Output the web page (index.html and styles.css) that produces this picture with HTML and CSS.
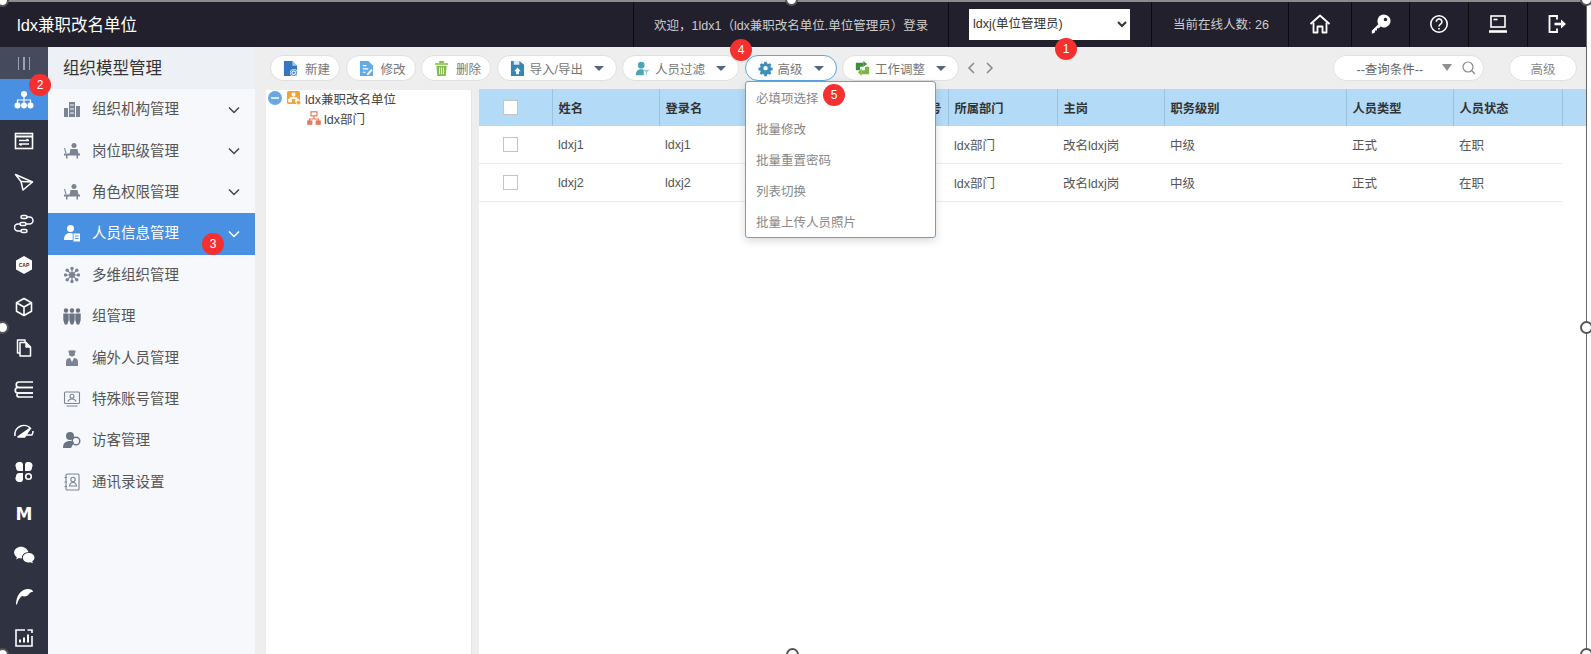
FILE: index.html
```html
<!DOCTYPE html>
<html lang="zh-CN">
<head>
    <meta charset="UTF-8">
    <title>组织模型管理</title>
    <link rel="stylesheet" href="styles.css">
</head>
<body>
<div class="page">
    <div class="frame-top"></div>

    <header class="topbar">
        <div class="brand">ldx兼职改名单位</div>
        <div class="cell welcome">欢迎，1ldx1（ldx兼职改名单位.单位管理员）登录</div>
        <div class="cell role">
            <select class="role-select"><option>ldxj(单位管理员)</option></select>
        </div>
        <div class="cell online">当前在线人数: 26</div>
        <div class="cell top-icon home">
            <svg width="22" height="22" viewBox="0 0 22 22" fill="none" stroke="#fff" stroke-width="1.8" stroke-linejoin="round"><path d="M1.5 11 11 2.5 20.500 11"/><path d="M4.500 9.500V19.500H8.500V13.500H13.500V19.500H17.500V9.500"/></svg>
        </div>
        <div class="cell top-icon key">
            <svg width="20" height="20" viewBox="0 0 20 20" fill="#fff"><path d="M13 0.500a6.500 6.500 0 1 1-3.300 12.100L8 14.300H6v2.200H4v2L2 19.500H0.800V16.800L7.300 10.200A6.500 6.500 0 0 1 13 0.500Z"/><circle cx="14.500" cy="5.500" r="1.700" fill="#22202c"/></svg>
        </div>
        <div class="cell top-icon help">
            <svg width="20" height="20" viewBox="0 0 20 20" fill="none" stroke="#fff" stroke-width="1.600"><circle cx="10" cy="10" r="8.200"/><path d="M7.300 7.800a2.800 2.800 0 1 1 4.300 2.300c-1 .7-1.600 1.100-1.600 2.300"/><path d="M10 14v1.500"/></svg>
        </div>
        <div class="cell top-icon monitor">
            <svg width="20" height="20" viewBox="0 0 20 20" fill="none" stroke="#fff" stroke-width="1.600"><rect x="3" y="2" width="14" height="11"/><path d="M5.500 5.500h4" /><path d="M1 17.500h18" stroke-width="2.600"/></svg>
        </div>
        <div class="cell top-icon logout">
            <svg width="20" height="20" viewBox="0 0 20 20" fill="none" stroke="#fff" stroke-width="1.800"><path d="M10 5.500V2H2.500V18H10V14.500"/><path d="M7.500 10h7" stroke-width="2.600"/><path d="M14 5.500 19 10 14 14.500Z" fill="#fff" stroke="none"/></svg>
        </div>
    </header>

    <div class="main">
        <nav class="rail">
            <div class="rail-toggle"><i></i><i></i><i></i></div>
            <a class="rail-item active">
                <svg width="20" height="20" viewBox="0 0 20 20" fill="#fff"><circle cx="10" cy="4" r="3"/><circle cx="3.500" cy="15.500" r="3"/><circle cx="10" cy="15.500" r="3"/><circle cx="16.500" cy="15.500" r="3"/><path d="M9.400 6h1.200v3.400h6.500v4h-1.200v-2.800H10.600v2.800H9.400v-2.800H4.100v2.800H2.900v-4h6.500Z"/></svg>
            </a>
            <a class="rail-item">
                <svg width="20" height="20" viewBox="0 0 20 20" fill="none" stroke="#fff" stroke-width="1.600"><rect x="1.500" y="2.500" width="17" height="15"/><path d="M1.500 5.500h17" stroke-width="2"/><path d="M5 9.500h10M12.500 8l2.500 1.500M15 13H5M7.500 14.500 5 13" stroke-width="1.400"/></svg>
            </a>
            <a class="rail-item">
                <svg width="20" height="20" viewBox="0 0 20 20" fill="none" stroke="#fff" stroke-width="1.500" stroke-linejoin="round"><path d="M1.500 2.500 18.500 10 9 18 7 9.500Z"/><path d="M7 9.500 18.500 10"/></svg>
            </a>
            <a class="rail-item">
                <svg width="20" height="20" viewBox="0 0 20 20" fill="none" stroke="#fff" stroke-width="1.500"><rect x="7" y="1.500" width="6" height="3" rx="1.500"/><rect x="6" y="8.500" width="6" height="3" rx="1.500"/><rect x="7" y="15.500" width="6" height="3" rx="1.500"/><path d="M13 3h2.500a3.500 3.500 0 0 1 0 7H12M6 10H4a3 3 0 0 0 0 7h3"/></svg>
            </a>
            <a class="rail-item">
                <svg width="20" height="20" viewBox="0 0 20 20"><path d="M10 1 18 5.500V14.500L10 19 2 14.500V5.500Z" fill="#fff"/><text x="10" y="12" text-anchor="middle" class="cap-text">CAP</text></svg>
            </a>
            <a class="rail-item">
                <svg width="20" height="20" viewBox="0 0 20 20" fill="none" stroke="#fff" stroke-width="1.600" stroke-linejoin="round"><path d="M10 1.500 17.500 5.700V14.300L10 18.500 2.500 14.300V5.700Z"/><path d="M2.500 5.700 10 10 17.500 5.700M10 10V18.500"/></svg>
            </a>
            <a class="rail-item">
                <svg width="20" height="20" viewBox="0 0 20 20" fill="none" stroke="#fff" stroke-width="1.500" stroke-linejoin="round"><path d="M6 4.500H12L16.500 9V18H6Z"/><path d="M6 15H3.500V2H11V4.500"/><path d="M12 4.500V9H16.500" fill="#fff"/></svg>
            </a>
            <a class="rail-item">
                <svg width="20" height="20" viewBox="0 0 20 20" fill="none" stroke="#fff" stroke-width="1.700"><path d="M19 3H5a2.500 2.500 0 0 0 0 5.500h14"/><path d="M19 8.500H4a2.500 2.500 0 0 0 0 5.500h15"/><path d="M19 14H5a2 2 0 0 0 0 4h14"/></svg>
            </a>
            <a class="rail-item">
                <svg width="22" height="20" viewBox="0 0 22 20" fill="none" stroke="#fff" stroke-width="1.600" stroke-linejoin="round"><path d="M2 15a9 9 0 0 1 16-7"/><path d="M20 10a9 9 0 0 1-1 4H9"/><path d="M5 16 17 7.500 11.500 16Z" fill="#fff"/></svg>
            </a>
            <a class="rail-item">
                <svg width="20" height="20" viewBox="0 0 20 20" fill="#fff"><path d="M2 5.500A3.500 3.500 0 0 1 9 2V9H5.500A3.500 3.500 0 0 1 2 5.500Z"/><path d="M18 5.500A3.500 3.500 0 0 0 11 2V9h3.500A3.500 3.500 0 0 0 18 5.500Z"/><path d="M2 14.500A3.500 3.500 0 0 0 9 18V11H5.500A3.500 3.500 0 0 0 2 14.500Z"/><circle cx="14.500" cy="14.500" r="2.800" fill="none" stroke="#fff" stroke-width="1.600"/></svg>
            </a>
            <a class="rail-item m-logo">M</a>
            <a class="rail-item">
                <svg width="22" height="22" viewBox="0 0 20 20" fill="#fff"><path d="M7.500 2.500C3.900 2.500 1 4.900 1 7.800c0 1.700 1 3.200 2.500 4.200L3 14l2.300-1.200c.7.200 1.400.3 2.200.3h.5a5 5 0 0 1 5.500-5.500h.7C13.100 4.600 10.600 2.500 7.500 2.500Z"/><path d="M19.500 12.500c0-2.500-2.400-4.300-5.200-4.300s-5.300 1.800-5.300 4.300 2.400 4.300 5.300 4.300c.6 0 1.200-.1 1.700-.3l2 1-.5-1.800c1.200-.8 2-1.900 2-3.200Z"/></svg>
            </a>
            <a class="rail-item">
                <svg width="20" height="20" viewBox="0 0 20 20" fill="#fff"><path d="M2 18.500C2 10 7 3 14 3c3 0 5 1 5 3-2 0-3 .5-4 2-1 2-4 3-7 2-2 1.500-4 4-5 8.500Z"/></svg>
            </a>
            <a class="rail-item">
                <svg width="20" height="20" viewBox="0 0 20 20" fill="none" stroke="#fff" stroke-width="1.600"><path d="M11 2H2V18H18V8M13.500 2H18V5"/><path d="M6 14.500v-3M10 14.500v-5M14 14.500v-8" stroke-width="2"/></svg>
            </a>
        </nav>

        <aside class="sidebar">
            <div class="side-title">组织模型管理</div>
            <a class="side-item">
                <svg class="side-icon" viewBox="0 0 18 18" fill="#7b8494"><path d="M1 8h4v9H1ZM6 2h6v15H6ZM13 6h4v11h-4Z"/><path d="M7.500 4h1v2h-1ZM9.500 4h1v2h-1ZM7.500 8h1v2h-1ZM9.500 8h1v2h-1ZM7.500 12h1v2h-1ZM9.500 12h1v2h-1Z" fill="#f6f8fb"/></svg>
                <span class="side-text">组织机构管理</span>
                <svg class="chev" viewBox="0 0 12 8" fill="none" stroke="#444" stroke-width="1.500"><path d="M1 1.500 6 6.500 11 1.500"/></svg>
            </a>
            <a class="side-item">
                <svg class="side-icon" viewBox="0 0 18 18" fill="#7b8494"><circle cx="11" cy="3.500" r="2.500"/><path d="M7.500 7h7l1 5h-9Z"/><path d="M1 11.500h16v2H15v3h-1.500v-3h-9v3H3v-3H1ZM2 6l1.500 5H2.300L1 6Z"/></svg>
                <span class="side-text">岗位职级管理</span>
                <svg class="chev" viewBox="0 0 12 8" fill="none" stroke="#444" stroke-width="1.500"><path d="M1 1.500 6 6.500 11 1.500"/></svg>
            </a>
            <a class="side-item">
                <svg class="side-icon" viewBox="0 0 18 18" fill="#7b8494"><circle cx="11" cy="3.500" r="2.500"/><path d="M7.500 7h7l1 5h-9Z"/><path d="M1 11.500h16v2H15v3h-1.500v-3h-9v3H3v-3H1ZM2 6l1.500 5H2.300L1 6Z"/></svg>
                <span class="side-text">角色权限管理</span>
                <svg class="chev" viewBox="0 0 12 8" fill="none" stroke="#444" stroke-width="1.500"><path d="M1 1.500 6 6.500 11 1.500"/></svg>
            </a>
            <a class="side-item active">
                <svg class="side-icon" viewBox="0 0 18 18" fill="#fff"><circle cx="7.500" cy="4.500" r="3.500"/><path d="M1 16c0-4.500 2-7 6.500-7 1 0 1.500.1 2.200.4V16Z"/><path d="M10.500 9.500h6.500v8h-6.500Z"/><path d="M12 12h3.500M12 14.500h3.500" stroke="#4a90e2"/></svg>
                <span class="side-text">人员信息管理</span>
                <svg class="chev" viewBox="0 0 12 8" fill="none" stroke="#fff" stroke-width="1.500"><path d="M1 1.500 6 6.500 11 1.500"/></svg>
            </a>
            <a class="side-item">
                <svg class="side-icon" viewBox="0 0 18 18" fill="#7b8494"><path d="M9 1v16M1 9h16M3.300 3.300l11.400 11.400M14.700 3.300 3.300 14.700" stroke="#7b8494" stroke-width="1.200"/><circle cx="9" cy="9" r="3"/><circle cx="9" cy="2.500" r="1.700"/><circle cx="9" cy="15.500" r="1.700"/><circle cx="2.500" cy="9" r="1.700"/><circle cx="15.500" cy="9" r="1.700"/><circle cx="4.200" cy="4.200" r="1.700"/><circle cx="13.800" cy="4.200" r="1.700"/><circle cx="4.200" cy="13.800" r="1.700"/><circle cx="13.800" cy="13.800" r="1.700"/></svg>
                <span class="side-text">多维组织管理</span>
            </a>
            <a class="side-item">
                <svg class="side-icon" viewBox="0 0 18 18" fill="#6a7382"><circle cx="3" cy="3.500" r="2.200"/><circle cx="9" cy="3.500" r="2.200"/><circle cx="15" cy="3.500" r="2.200"/><path d="M.3 6.500h5.400v6.500l-1.400 4.500H1.700L.3 13ZM6.300 6.500h5.400v6.500l-1.400 4.500H7.700L6.300 13ZM12.300 6.500h5.400v6.500l-1.400 4.500h-2.600L12.300 13Z"/></svg>
                <span class="side-text">组管理</span>
            </a>
            <a class="side-item">
                <svg class="side-icon" viewBox="0 0 18 18" fill="#7b8494"><circle cx="9" cy="4.500" r="3"/><path d="M5.500 1.500h7v2h-7Z"/><path d="M3 17v-4.500C3 10 5 9 7 9l2 4 2-4c2 0 4 1 4 3.500V17Z"/></svg>
                <span class="side-text">编外人员管理</span>
            </a>
            <a class="side-item">
                <svg class="side-icon" viewBox="0 0 18 18" fill="none" stroke="#7b8494" stroke-width="1.100"><rect x="1.500" y="2" width="15" height="11.500" rx="1"/><circle cx="9" cy="6.300" r="2"/><path d="M5 11.500c.5-2 2-2.500 4-2.500s3.500.5 4 2.500M3.500 16h11"/></svg>
                <span class="side-text">特殊账号管理</span>
            </a>
            <a class="side-item">
                <svg class="side-icon" viewBox="0 0 18 18" fill="#6a7382"><circle cx="7" cy="5" r="4"/><path d="M0 17c0-5 2.500-7 7-7 2 0 3 .5 4 1.500L8 17Z"/><circle cx="13" cy="10" r="3.800" fill="none" stroke="#6a7382" stroke-width="1.400"/></svg>
                <span class="side-text">访客管理</span>
            </a>
            <a class="side-item">
                <svg class="side-icon" viewBox="0 0 18 18" fill="none" stroke="#7b8494" stroke-width="1.100"><rect x="3" y="1" width="13" height="16" rx="1"/><circle cx="10" cy="6.500" r="2.200"/><path d="M6.500 13c.3-2.500 1.500-3.500 3.500-3.500s3.200 1 3.500 3.500ZM1.500 4.500H4M1.500 9H4M1.500 13.500H4"/></svg>
                <span class="side-text">通讯录设置</span>
            </a>
        </aside>

        <div class="workspace">
            <div class="toolbar">
                <button class="tool-btn small">
                    <svg class="tool-icon" viewBox="0 0 16 18"><path d="M1 1h9l5 5v11H1Z" fill="#3476c0"/><path d="M10 1v5h5Z" fill="#a8c8ea"/><circle cx="11.500" cy="13.500" r="4" fill="#fff"/><circle cx="11.500" cy="13.500" r="3" fill="none" stroke="#3476c0"/><path d="M11.500 12v3M10 13.500h3" stroke="#3476c0"/></svg>
                    新建
                </button>
                <button class="tool-btn small">
                    <svg class="tool-icon" viewBox="0 0 16 18"><path d="M1 1h9l5 5v11H1Z" fill="#62abe4"/><path d="M4 6h4M4 9.500h6M4 13h3" stroke="#fff" stroke-width="1.300"/><path d="M8.500 14.500 13 9.500l1.500 1.500-4.500 5H8.500Z" fill="#fff"/></svg>
                    修改
                </button>
                <button class="tool-btn small">
                    <svg class="tool-icon" viewBox="0 0 16 18" fill="#80bd4a"><path d="M1 3.500h14v1.500H1ZM5.500 1h5v2h-5Z"/><path d="M2.500 6h11L12.500 17h-9ZM5.500 8v7h1V8ZM7.500 8v7h1V8ZM9.500 8v7h1V8Z" fill-rule="evenodd"/></svg>
                    删除
                </button>
                <button class="tool-btn wide">
                    <svg class="tool-icon" viewBox="0 0 16 18"><path d="M1 1h9l5 4v12H1Z" fill="#3a86b0"/><path d="M4 1h6v4H4Z" fill="#dbe8ef"/><path d="M8 8 11.500 12H9.500v3h-3v-3H4.500Z" fill="#fff"/></svg>
                    导入/导出<i class="caret"></i>
                </button>
                <button class="tool-btn mid">
                    <svg class="tool-icon user-filter" viewBox="0 0 18 18"><circle cx="7.500" cy="5" r="4" fill="#4ea3b5"/><path d="M1 17c0-5 2.500-7 6.500-7 1.500 0 2.500.3 3 .7V17Z" fill="#4ea3b5"/><path d="M10 10.500h7.500l-3 3v3l-1.500 1v-4Z" fill="#9cccd8"/></svg>
                    人员过滤<i class="caret"></i>
                </button>
                <button class="tool-btn adv open">
                    <svg class="tool-icon" viewBox="0 0 18 18" fill="#3f8fb8"><path d="M7.500 1h3l.4 2.200 1.600.7 1.900-1.200 2 2.100-1.200 1.800.6 1.600 2.200.4v3l-2.200.4-.6 1.600 1.200 1.800-2 2.100-1.900-1.200-1.600.7-.4 2.200h-3l-.4-2.200-1.600-.7-1.900 1.200-2-2.100 1.200-1.800-.6-1.600-2.200-.4v-3l2.200-.4.600-1.600L1.600 4.800l2-2.100 1.900 1.200 1.600-.7ZM9 6.200a2.800 2.800 0 1 0 0 5.600 2.800 2.800 0 0 0 0-5.600Z" fill-rule="evenodd" transform="translate(.5 0) scale(.95)"/></svg>
                    高级<i class="caret"></i>
                </button>
                <button class="tool-btn mid work">
                    <svg class="tool-icon" viewBox="0 0 18 18"><path d="M1 2h9v5H6v4H1Z" fill="#3f8f3a"/><path d="M17 16H8v-5h4V7h5Z" fill="#7bb542"/><path d="M10 0l4.500 3.500L10 7Z" fill="#3f8f3a"/><path d="M8 18l-4.500-4.500L8 9Z" fill="#7bb542"/></svg>
                    工作调整<i class="caret"></i>
                </button>
                <svg class="pager" viewBox="0 0 30 14" fill="none" stroke="#888" stroke-width="1.500"><path d="M7 2 2 7 7 12M20 2 25 7 20 12"/></svg>

                <div class="query">
                    <span class="query-text">--查询条件--</span>
                    <i class="query-caret"></i>
                    <svg class="query-search" viewBox="0 0 14 14" fill="none" stroke="#888" stroke-width="1.200"><circle cx="6" cy="6" r="5"/><path d="M9.500 9.500 13 13"/></svg>
                </div>
                <button class="tool-btn adv-right">高级</button>
            </div>

            <div class="content">
                <div class="tree">
                    <div class="tree-row">
                        <span class="tree-minus"></span>
                        <svg class="tree-icon" viewBox="0 0 14 14"><rect width="13" height="13" rx="1.500" fill="#f0a23c"/><path d="M5 2h3v3H5ZM1.500 8h3v3h-3ZM8.500 8h3v3h-3ZM3 8V6.500h7V8M6.500 5V6.500" fill="#fff" stroke="#fff" stroke-width=".6"/><circle cx="11.500" cy="11.500" r="2.200" fill="#f0a23c" stroke="#fff" stroke-width=".7"/></svg>
                        <span>ldx兼职改名单位</span>
                    </div>
                    <div class="tree-row child">
                        <svg class="tree-icon" viewBox="0 0 14 14" fill="none" stroke="#e8785a" stroke-width="1.200"><rect x="4" y=".8" width="6" height="4"/><path d="M7 5v3M2.500 10V8h9v2"/><rect x=".8" y="10" width="4" height="3.200" fill="#e8785a"/><rect x="9.200" y="10" width="4" height="3.200" fill="#e8785a"/></svg>
                        <span>ldx部门</span>
                    </div>
                </div>

                <div class="grid-wrap">
                    <table class="grid">
                        <colgroup>
                            <col class="c73"><col class="c107"><col class="c108"><col class="c119"><col class="c62"><col class="c109"><col class="c107"><col class="c182"><col class="c107"><col class="c109"><col class="c24">
                        </colgroup>
                        <thead>
                            <tr>
                                <th class="check-cell"><span class="check"></span></th>
                                <th>姓名</th><th>登录名</th><th></th><th>人员编号</th><th>所属部门</th><th>主岗</th><th>职务级别</th><th>人员类型</th><th>人员状态</th><th></th>
                            </tr>
                        </thead>
                        <tbody>
                            <tr>
                                <td class="check-cell"><span class="check"></span></td>
                                <td>ldxj1</td><td>ldxj1</td><td></td><td></td><td>ldx部门</td><td>改名ldxj岗</td><td>中级</td><td>正式</td><td>在职</td><td class="tail"></td>
                            </tr>
                            <tr>
                                <td class="check-cell"><span class="check"></span></td>
                                <td>ldxj2</td><td>ldxj2</td><td></td><td></td><td>ldx部门</td><td>改名ldxj岗</td><td>中级</td><td>正式</td><td>在职</td><td class="tail"></td>
                            </tr>
                        </tbody>
                    </table>
                </div>
            </div>
        </div>
    </div>

    <ul class="adv-menu">
        <li>必填项选择</li>
        <li>批量修改</li>
        <li>批量重置密码</li>
        <li>列表切换</li>
        <li>批量上传人员照片</li>
    </ul>

    <span class="badge b1">1</span>
    <span class="badge b2">2</span>
    <span class="badge b3">3</span>
    <span class="badge b4">4</span>
    <span class="badge b5">5</span>

    <i class="handle h-tl"></i><i class="handle h-tc"></i><i class="handle h-tr"></i>
    <i class="handle h-ml"></i><i class="handle h-mr"></i>
    <i class="handle h-bl"></i><i class="handle h-bc"></i><i class="handle h-br"></i>
</div>
</body>
</html>
```

FILE: styles.css
```css
html, body {
    margin: 0;
    padding: 0;
    height: 100%;
    overflow: hidden;
    background: #fff;
}

body {
    font-family: "Liberation Sans", "Noto Sans CJK SC", sans-serif;
    font-size: 12.5px;
    color: #555;
}

.page {
    position: relative;
    display: flex;
    flex-direction: column;
    width: 1587px;
    height: 654px;
    box-sizing: border-box;
    border-right: 1px solid #666;
}

.frame-top {
    height: 2px;
    background: #8c8c8c;
    flex: none;
}

/* 顶栏 */
.topbar {
    display: flex;
    flex: none;
    height: 45px;
    background: #22202c;
    color: #ccc;
}

.brand {
    width: 616px;
    padding-left: 17px;
    font-size: 16.5px;
    line-height: 46px;
    color: #fff;
}

.cell {
    display: flex;
    align-items: center;
    box-sizing: border-box;
    border-left: 1px solid #0c0b10;
}

.welcome {
    width: 315px;
    padding-left: 20px;
    white-space: nowrap;
}

.role {
    width: 203px;
    padding-left: 20px;
}

.role-select {
    width: 161px;
    height: 31px;
    border: 0;
    border-radius: 0;
    background: #fff;
    font: 12.5px "Liberation Sans", "Noto Sans CJK SC", sans-serif;
    color: #333;
    margin-top: -1px;
}

.online {
    width: 137px;
    padding: 0 0 2px 21px;
    white-space: nowrap;
}

.top-icon {
    justify-content: center;
    padding-bottom: 2px;
}

.home { width: 63px; }
.key { width: 58px; }
.help { width: 59px; }
.monitor { width: 59px; }
.logout { width: 58px; }

.main {
    display: flex;
    flex: 1;
    min-height: 0;
}

/* 左侧图标栏 */
.rail {
    flex: none;
    width: 48px;
    background: #2f3241;
}

.rail-toggle {
    display: flex;
    justify-content: center;
    align-items: center;
    gap: 4px;
    height: 32px;
    background: #454a5c;
}

.rail-toggle i {
    width: 1.500px;
    height: 13px;
    background: #9ea3b0;
}

.rail-item {
    display: flex;
    justify-content: center;
    align-items: center;
    height: 41.4px;
}

.rail-item.active {
    background: #4a90e2;
}

.cap-text {
    font: bold 5px "Liberation Sans", sans-serif;
    fill: #2f3241;
}

.m-logo {
    font: bold 17px "DejaVu Sans", sans-serif;
    color: #fff;
}

/* 二级菜单 */
.sidebar {
    flex: none;
    width: 207px;
    background: #f6f8fb;
}

.side-title {
    height: 42px;
    padding-left: 15px;
    background: #edf0f4;
    font-size: 16.5px;
    line-height: 42px;
    color: #333;
}

.side-item {
    display: flex;
    align-items: center;
    height: 41.4px;
    padding: 0 15px 0 15px;
    font-size: 14.5px;
    color: #555;
}

.side-item.active {
    background: #4a90e2;
    color: #fff;
}

.side-icon {
    width: 18px;
    height: 18px;
    flex: none;
    margin-bottom: 1px;
}

.side-text {
    flex: 1;
    margin: 0 0 4px 11px;
}

.chev {
    width: 12px;
    height: 8px;
}

/* 工具栏 */
.workspace {
    display: flex;
    flex: 1;
    flex-direction: column;
    min-width: 0;
    background: #eee;
}

.toolbar {
    display: flex;
    align-items: center;
    flex: none;
    gap: 5.500px;
    height: 42px;
    padding: 0 9px 0 15px;
}

.tool-btn {
    display: flex;
    align-items: center;
    box-sizing: border-box;
    height: 26px;
    padding: 0 0 0 12px;
    border: 1px solid #e0e0e0;
    border-radius: 13px;
    background: #fff;
    font: 12.5px "Liberation Sans", "Noto Sans CJK SC", sans-serif;
    color: #777;
    white-space: nowrap;
}

.tool-btn.small { width: 70px; }
.tool-btn.wide { width: 120px; }
.tool-btn.mid { width: 117px; }
.tool-btn.adv { width: 92px; }

.tool-btn.open {
    border-color: #58a8e0;
}

.tool-icon {
    width: 15px;
    height: 17px;
    margin-right: 7px;
    flex: none;
}

.wide .tool-icon,
.mid .tool-icon,
.adv .tool-icon {
    margin-right: 5px;
}

.caret {
    width: 0;
    height: 0;
    margin-left: 11px;
    border-style: solid;
    border-width: 5px 5.500px 0;
    border-color: #55677f transparent transparent;
}

.pager {
    width: 30px;
    height: 14px;
    margin-left: 2px;
}

.query {
    display: flex;
    align-items: center;
    box-sizing: border-box;
    width: 151px;
    height: 26px;
    margin-left: auto;
    padding-left: 23px;
    border: 1px solid #e2e2e2;
    border-radius: 13px;
    background: #fff;
    color: #666;
}

.query-text {
    width: 67px;
    white-space: nowrap;
}

.query-caret {
    width: 0;
    height: 0;
    margin: -2px 0 0 18px;
    border-style: solid;
    border-width: 7px 5.500px 0;
    border-color: #8f8f8f transparent transparent;
}

.query-search {
    width: 14px;
    height: 14px;
    margin-left: 10px;
}

.tool-btn.adv-right {
    justify-content: center;
    width: 68px;
    margin-left: 20px;
    padding: 0;
    color: #888;
}

/* 内容区 */
.content {
    display: flex;
    flex: 1;
    min-height: 0;
    padding-left: 11px;
}

.tree {
    flex: none;
    box-sizing: border-box;
    width: 206px;
    margin: 1px 7px 0 0;
    padding: 0 0 0 2px;
    background: #fff;
    border-right: 1px solid #e4e4e4;
    color: #444;
}

.tree-row {
    display: flex;
    align-items: center;
    box-sizing: border-box;
    height: 20px;
    padding-bottom: 4px;
    white-space: nowrap;
}

.tree-row.child {
    padding-left: 39px;
}

.tree-minus {
    position: relative;
    width: 14px;
    height: 14px;
    margin-right: 5px;
    border-radius: 50%;
    background: #6aa9df;
}

.tree-minus:after {
    content: '';
    position: absolute;
    left: 3px;
    right: 3px;
    top: 6px;
    height: 2px;
    background: #d9e9f7;
}

.tree-icon {
    width: 14px;
    height: 14px;
    margin-right: 4px;
    flex: none;
}

.tree-row.child .tree-icon {
    margin-right: 3px;
}

.grid-wrap {
    flex: 1;
    min-width: 0;
    background: #fff;
}

.grid {
    width: 1107px;
    table-layout: fixed;
    border-collapse: collapse;
    border-spacing: 0;
}

.c73 { width: 73px; }
.c107 { width: 107px; }
.c108 { width: 108px; }
.c119 { width: 119px; }
.c62 { width: 62px; }
.c109 { width: 109px; }
.c182 { width: 182px; }
.c24 { width: 24px; }

.grid th {
    height: 37px;
    padding: 0 0 0 6px;
    background: #b3dbf7;
    border-right: 1px solid #9cc3de;
    font-size: 12.25px;
    font-weight: bold;
    color: #333;
    text-align: left;
    white-space: nowrap;
}

.grid th:last-child {
    border-right: 0;
}

.grid td {
    height: 37px;
    padding: 0 0 0 6px;
    border-bottom: 1px solid #ebebeb;
    white-space: nowrap;
}

.grid td.tail {
    border-bottom: 0;
}

.grid .check-cell {
    padding-left: 24px;
}

.check {
    display: block;
    box-sizing: border-box;
    width: 15px;
    height: 15px;
    border: 1px solid #c4c4c4;
    background: #fff;
}

/* 高级下拉 */
.adv-menu {
    position: absolute;
    left: 745px;
    top: 81px;
    width: 191px;
    height: 157px;
    box-sizing: border-box;
    margin: 0;
    padding: 2px 0 0 10px;
    list-style: none;
    background: #fff;
    border: 1px solid #58a8e0;
    border-radius: 3px;
    box-shadow: 0 3px 8px rgba(0, 0, 0, 0.15);
    color: #888;
}

.adv-menu li {
    height: 31px;
    line-height: 30px;
}

/* 红色标注 */
.badge {
    position: absolute;
    width: 22px;
    height: 22px;
    border-radius: 50%;
    background: #f5302f;
    color: #fff;
    font-size: 12px;
    line-height: 22px;
    text-align: center;
}

.b1 { left: 1055px; top: 38px; }
.b2 { left: 29px; top: 74px; }
.b3 { left: 202px; top: 233px; }
.b4 { left: 730px; top: 39px; }
.b5 { left: 823px; top: 84px; }

/* 选中框手柄 */
.handle {
    position: absolute;
    width: 9px;
    height: 9px;
    border: 2px solid #555;
    border-radius: 50%;
    background: #fff;
}

.h-tl { left: -4px; top: -6px; }
.h-tc { left: 785px; top: -7px; }
.h-tr { right: -7px; top: -7px; }
.h-ml { left: -4px; top: 321px; }
.h-mr { right: -7px; top: 321px; }
.h-bl { left: -4px; bottom: -7px; }
.h-bc { left: 786px; bottom: -7px; }
.h-br { right: -7px; bottom: -7px; }
```
